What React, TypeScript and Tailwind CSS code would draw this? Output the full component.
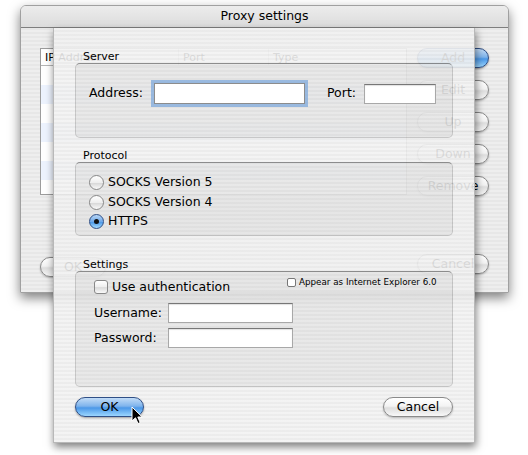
import React from "react";

const stripes =
  "bg-[repeating-linear-gradient(to_bottom,#eeeeee_0px,#eeeeee_2px,#e7e7e7_2px,#e7e7e7_4px)]";

function Pill({
  label,
  blue,
  className,
}: {
  label: string;
  blue?: boolean;
  className?: string;
}) {
  return (
    <div
      className={`h-[20px] rounded-full border flex items-center justify-center text-[12.5px] leading-none ${
        blue
          ? "border-[#2f4f86] bg-[linear-gradient(to_bottom,#c2dcf7_0%,#7fb4ec_45%,#4b98e8_55%,#9bd6ff_100%)] shadow-[0_1px_2px_rgba(0,0,0,0.35)]"
          : "border-[#8a8a8a] bg-[linear-gradient(to_bottom,#ffffff_0%,#f3f3f3_45%,#dedede_55%,#f8f8f8_100%)] shadow-[0_1px_2px_rgba(0,0,0,0.25)]"
      } ${className ?? ""}`}
    >
      {label}
    </div>
  );
}

function Radio({ checked }: { checked?: boolean }) {
  return (
    <div
      className={`w-[15px] h-[15px] rounded-full border flex items-center justify-center shrink-0 ${
        checked
          ? "border-[#2f4f86] bg-[linear-gradient(to_bottom,#b9d7f6_0%,#6fa9ea_50%,#4b98e8_55%,#a5dcff_100%)]"
          : "border-[#888888] bg-[linear-gradient(to_bottom,#ffffff_0%,#eeeeee_50%,#d8d8d8_55%,#fafafa_100%)]"
      }`}
    >
      {checked && <div className="w-[5px] h-[5px] rounded-full bg-[#111]" />}
    </div>
  );
}

function Field({ className }: { className?: string }) {
  return (
    <div
      className={`h-[20px] bg-white border border-[#a8a8a8] border-t-[#777777] shadow-[inset_0_1px_1px_rgba(0,0,0,0.12)] ${
        className ?? ""
      }`}
    />
  );
}

function BackWindow() {
  const rows = [0, 1, 2, 3, 4, 5, 6];
  return (
    <div
      className={`absolute left-[20px] top-[5px] w-[489px] h-[288px] flex flex-col rounded-t-[6px] border border-[#a0a0a0] overflow-hidden shadow-[0_5px_12px_rgba(0,0,0,0.5)] ${stripes}`}
    >
      <div className="h-[22px] shrink-0 flex items-center justify-center border-b border-[#7e7e7e] bg-[linear-gradient(to_bottom,#ececec,#dcdcdc)] text-[12.5px]">
        Proxy settings
      </div>
      <div className="flex flex-1 pl-[19px] pr-[19px] pt-[20px]">
        <div className="flex flex-col">
          <div className="w-[367px] h-[147px] bg-white border border-[#9c9c9c] flex flex-col overflow-hidden">
            <div className="h-[17px] shrink-0 flex border-b border-[#b5b5b5] text-[11px] leading-[17px]">
              <div className="w-[138px] pl-[4px] border-r border-[#d0d0d0]">IP Address</div>
              <div className="w-[90px] pl-[4px] border-r border-[#d0d0d0]">Port</div>
              <div className="flex-1 pl-[4px]">Type</div>
            </div>
            {rows.map((r) => (
              <div
                key={r}
                className={`h-[19px] shrink-0 ${r % 2 === 1 ? "bg-[#edf3fe]" : "bg-white"}`}
              />
            ))}
          </div>
          <Pill label="OK" className="w-[66px] mt-[62px]" />
        </div>
        <div className="ml-auto flex flex-col gap-[12px] w-[72px]">
          <Pill label="Add" blue />
          <Pill label="Edit" />
          <Pill label="Up" />
          <Pill label="Down" />
          <Pill label="Remove" />
          <Pill label="Cancel" className="mt-[46px]" />
        </div>
      </div>
    </div>
  );
}

function Sheet() {
  return (
    <div className="absolute left-[53px] top-[28px] w-[422px] h-[415px] px-[21px] pt-[22px] bg-[repeating-linear-gradient(to_bottom,rgba(242,242,242,0.9)_0px,rgba(242,242,242,0.9)_2px,rgba(234,234,234,0.9)_2px,rgba(234,234,234,0.9)_4px)] shadow-[1px_4px_8px_rgba(0,0,0,0.5)] border-x border-b border-[#b8b8b8]">
      {/* Server */}
      <div className="h-[13px] leading-[13px] pl-[8px] text-[11px]">Server</div>
      <div className="h-[75px] rounded-[5px] border border-[rgba(0,0,0,0.14)] border-t-[rgba(0,0,0,0.38)] bg-[rgba(0,0,0,0.045)] pl-[13px] pt-[19px]">
        <div className="flex items-center h-[21px]">
          <div className="w-[65px] text-[12.5px]">Address:</div>
          <div className="w-[151px] h-[21px] bg-white border border-[#8c8c8c] shadow-[0_0_0_3px_rgba(120,165,220,0.7)]" />
          <div className="ml-[22px] w-[37px] text-[12.5px]">Port:</div>
          <Field className="w-[72px]" />
        </div>
      </div>

      {/* Protocol */}
      <div className="mt-[11px] h-[13px] leading-[13px] pl-[8px] text-[11px]">Protocol</div>
      <div className="h-[74px] rounded-[5px] border border-[rgba(0,0,0,0.14)] border-t-[rgba(0,0,0,0.38)] bg-[rgba(0,0,0,0.045)] pl-[13px] pt-[10px]">
        {[
          { l: "SOCKS Version 5" },
          { l: "SOCKS Version 4" },
          { l: "HTTPS", c: true },
        ].map((o) => (
          <div key={o.l} className="h-[19.5px] flex items-center gap-[4px] text-[12.5px]">
            <Radio checked={o.c} />
            <span>{o.l}</span>
          </div>
        ))}
      </div>

      {/* Settings */}
      <div className="mt-[22px] h-[13px] leading-[13px] pl-[8px] text-[11px]">Settings</div>
      <div className="h-[116px] rounded-[5px] border border-[rgba(0,0,0,0.14)] border-t-[rgba(0,0,0,0.38)] bg-[rgba(0,0,0,0.045)] pl-[18px] pt-[8px]">
        <div className="flex items-start h-[14px]">
          <div className="w-[193px] h-[14px] flex items-center gap-[4px] text-[12.5px] leading-[14px]">
            <div className="w-[14px] h-[14px] rounded-[3px] border border-[#888888] bg-[linear-gradient(to_bottom,#ffffff_0%,#eeeeee_50%,#dadada_55%,#fafafa_100%)]" />
            <span>Use authentication</span>
          </div>
          <div className="-mt-[3px] flex items-center gap-[3px] text-[8.75px] leading-[11px]">
            <div className="w-[9px] h-[9px] rounded-[2px] border border-[#777777] bg-white" />
            <span>Appear as Internet Explorer 6.0</span>
          </div>
        </div>
        <div className="mt-[9px] flex items-center h-[20px]">
          <div className="w-[74px] text-[12.5px]">Username:</div>
          <Field className="w-[125px]" />
        </div>
        <div className="mt-[5px] flex items-center h-[20px]">
          <div className="w-[74px] text-[12.5px]">Password:</div>
          <Field className="w-[125px]" />
        </div>
      </div>

      <div className="mt-[10px] flex justify-between">
        <Pill label="OK" blue className="w-[69px]" />
        <Pill label="Cancel" className="w-[70px]" />
      </div>
    </div>
  );
}

function Cursor() {
  return (
    <svg
      className="absolute left-[131px] top-[406px]"
      width="13"
      height="19"
      viewBox="0 0 13 19"
    >
      <path
        d="M1 1 L1 15 L4.5 11.8 L7 17.5 L9.2 16.6 L6.8 11 L11.2 11 Z"
        fill="#000"
        stroke="#fff"
        strokeWidth="1"
        strokeLinejoin="round"
      />
    </svg>
  );
}

export default function App() {
  return (
    <div className="relative w-[528px] h-[455px] overflow-hidden bg-white font-['DejaVu_Sans',sans-serif] text-black">
      <BackWindow />
      <Sheet />
      <Cursor />
    </div>
  );
}
